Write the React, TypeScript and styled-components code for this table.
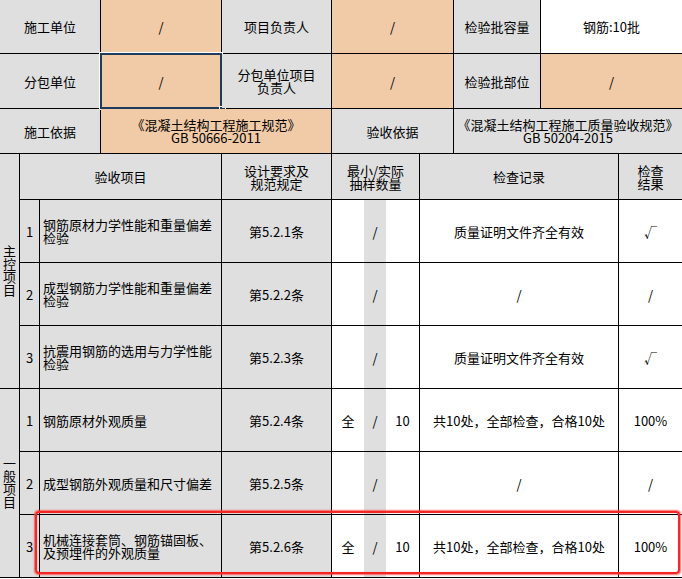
import React from "react";
import styled, { createGlobalStyle } from "styled-components";

const GlobalStyle = createGlobalStyle`
  html, body { margin: 0; padding: 0; background: #ffffff; }
  body {
    font-family: "Noto Sans CJK SC", "Noto Sans", sans-serif;
    font-size: 13px;
    color: #000;
  }
`;

type Fill = "gray" | "peach" | "white";
const fills: Record<Fill, string> = {
  gray: "#dfdfdf",
  peach: "#f1caa7",
  white: "#ffffff",
};

const Wrap = styled.div`
  position: relative;
  width: 682px;
`;

const Sheet = styled.div`
  display: grid;
  grid-template-columns: 19px 19px 60px 120px 109px 32px 21px 32px 33px 86px 77px 63px;
  grid-template-rows: 53px 54px 44px 45px repeat(6, 62px);
  gap: 1px;
  background: #000;
  border-bottom: 1px solid #000;
`;

const Cell = styled.div<{ $c: string; $r: string; $fill?: Fill; $left?: boolean }>`
  grid-column: ${(p) => p.$c};
  grid-row: ${(p) => p.$r};
  background: ${(p) => fills[p.$fill ?? "gray"]};
  display: flex;
  align-items: center;
  justify-content: ${(p) => (p.$left ? "flex-start" : "center")};
  text-align: ${(p) => (p.$left ? "left" : "center")};
  padding-left: ${(p) => (p.$left ? "3px" : "0")};
  line-height: 13px;
  white-space: nowrap;
  position: relative;
`;

const VerticalText = styled.span`
  writing-mode: vertical-rl;
  text-orientation: upright;
  line-height: 13px;
`;

const Sampling = styled.div`
  display: flex;
  width: 100%;
  height: 100%;
`;

const SampPart = styled.div<{ $w: number; $fill: Fill }>`
  flex: 0 0 ${(p) => p.$w}px;
  background: ${(p) => fills[p.$fill]};
  display: flex;
  align-items: center;
  justify-content: center;
`;

const Selection = styled.div`
  position: absolute;
  top: -1px;
  left: -1px;
  right: -1px;
  bottom: -1px;
  border: 2px solid #1f3c5c;
  box-shadow: 0 0 0 1px #ffffff;
  pointer-events: none;
`;

const Handle = styled.div`
  position: absolute;
  right: -5px;
  bottom: -5px;
  width: 5px;
  height: 5px;
  background: #1f3c5c;
  box-shadow: 0 0 0 1px #ffffff;
`;

const Highlight = styled.div`
  position: absolute;
  left: 35px;
  top: 511px;
  width: 645px;
  height: 63px;
  box-sizing: border-box;
  border: 2px solid #f52626;
  border-radius: 4px;
  box-shadow: 0 0 1.5px 0.5px rgba(255, 60, 60, 0.75), inset 0 0 1px rgba(255, 60, 60, 0.6);
  pointer-events: none;
`;

type Item = {
  no: string;
  name: React.ReactNode;
  clause: string;
  full?: string;
  count?: string;
  record: string;
  result: string;
};

const items: Item[] = [
  { no: "1", name: <>钢筋原材力学性能和重量偏差<br />检验</>, clause: "第5.2.1条", record: "质量证明文件齐全有效", result: "√" },
  { no: "2", name: <>成型钢筋力学性能和重量偏差<br />检验</>, clause: "第5.2.2条", record: "/", result: "/" },
  { no: "3", name: <>抗震用钢筋的选用与力学性能<br />检验</>, clause: "第5.2.3条", record: "质量证明文件齐全有效", result: "√" },
  { no: "1", name: "钢筋原材外观质量", clause: "第5.2.4条", full: "全", count: "10", record: "共10处，全部检查，合格10处", result: "100%" },
  { no: "2", name: "成型钢筋外观质量和尺寸偏差", clause: "第5.2.5条", record: "/", result: "/" },
  { no: "3", name: <>机械连接套筒、钢筋锚固板、<br />及预埋件的外观质量</>, clause: "第5.2.6条", full: "全", count: "10", record: "共10处，全部检查，合格10处", result: "100%" },
];

export default function App() {
  return (
    <>
      <GlobalStyle />
      <Wrap>
        <Sheet>
          {/* row 1 */}
          <Cell $c="1 / 4" $r="1">施工单位</Cell>
          <Cell $c="4" $r="1" $fill="peach">/</Cell>
          <Cell $c="5" $r="1">项目负责人</Cell>
          <Cell $c="6 / 10" $r="1" $fill="peach">/</Cell>
          <Cell $c="10" $r="1">检验批容量</Cell>
          <Cell $c="11 / 13" $r="1" $fill="white">钢筋:10批</Cell>

          {/* row 2 */}
          <Cell $c="1 / 4" $r="2">分包单位</Cell>
          <Cell $c="4" $r="2" $fill="peach">
            /
            <Selection>
              <Handle />
            </Selection>
          </Cell>
          <Cell $c="5" $r="2">分包单位项目<br />负责人</Cell>
          <Cell $c="6 / 10" $r="2" $fill="peach">/</Cell>
          <Cell $c="10" $r="2">检验批部位</Cell>
          <Cell $c="11 / 13" $r="2" $fill="peach">/</Cell>

          {/* row 3 */}
          <Cell $c="1 / 4" $r="3">施工依据</Cell>
          <Cell $c="4 / 6" $r="3" $fill="peach">《混凝土结构工程施工规范》<br />GB 50666-2011</Cell>
          <Cell $c="6 / 10" $r="3">验收依据</Cell>
          <Cell $c="10 / 13" $r="3">《混凝土结构工程施工质量验收规范》<br />GB 50204-2015</Cell>

          {/* header */}
          <Cell $c="1" $r="4 / 8"><VerticalText>主控项目</VerticalText></Cell>
          <Cell $c="1" $r="8 / 11"><VerticalText>一般项目</VerticalText></Cell>
          <Cell $c="2 / 5" $r="4">验收项目</Cell>
          <Cell $c="5" $r="4">设计要求及<br />规范规定</Cell>
          <Cell $c="6 / 9" $r="4">最小/实际<br />抽样数量</Cell>
          <Cell $c="9 / 12" $r="4">检查记录</Cell>
          <Cell $c="12" $r="4">检查<br />结果</Cell>

          {items.map((it, i) => {
            const r = String(5 + i);
            return (
              <React.Fragment key={i}>
                <Cell $c="2" $r={r}>{it.no}</Cell>
                <Cell $c="3 / 5" $r={r} $left>{it.name}</Cell>
                <Cell $c="5" $r={r}>{it.clause}</Cell>
                <Cell $c="6 / 9" $r={r} $fill="white">
                  <Sampling>
                    <SampPart $w={32} $fill="white">{it.full}</SampPart>
                    <SampPart $w={22} $fill="gray">/</SampPart>
                    <SampPart $w={33} $fill="white">{it.count}</SampPart>
                  </Sampling>
                </Cell>
                <Cell $c="9 / 12" $r={r} $fill="white">{it.record}</Cell>
                <Cell $c="12" $r={r} $fill="white">{it.result}</Cell>
              </React.Fragment>
            );
          })}
        </Sheet>
        <Highlight />
      </Wrap>
    </>
  );
}
